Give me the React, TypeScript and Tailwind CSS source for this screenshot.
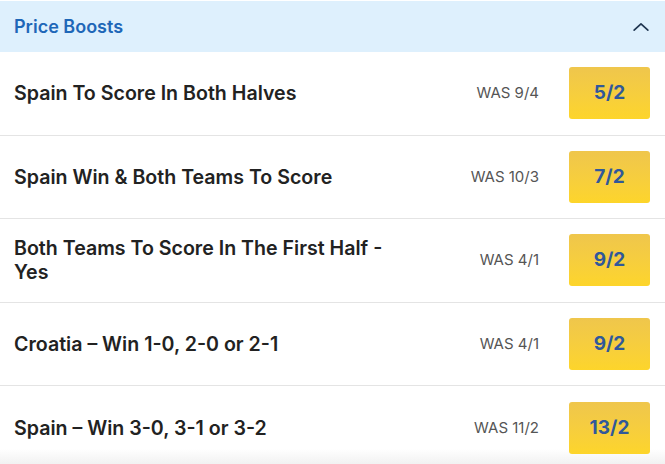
import * as React from 'react';

interface Boost {
  title: string;
  was: string;
  odds: string;
}

const boosts: Boost[] = [
  { title: 'Spain To Score In Both Halves', was: 'WAS 9/4', odds: '5/2' },
  { title: 'Spain Win & Both Teams To Score', was: 'WAS 10/3', odds: '7/2' },
  { title: 'Both Teams To Score In The First Half - Yes', was: 'WAS 4/1', odds: '9/2' },
  { title: 'Croatia – Win 1-0, 2-0 or 2-1', was: 'WAS 4/1', odds: '9/2' },
  { title: 'Spain – Win 3-0, 3-1 or 3-2', was: 'WAS 11/2', odds: '13/2' },
];

export default function App() {
  return (
    <div className="w-[665px] h-[464px] overflow-hidden bg-white font-['Inter','Liberation_Sans',sans-serif]">
      {/* Header */}
      <div className="h-[51px] mt-[1px] bg-[#def0fd] flex items-center justify-between pl-[14px] pr-[13px]">
        <span className="text-[18px] font-semibold text-[#1e67b8]">Price Boosts</span>
        <ChevronUp />
      </div>

      {boosts.map((b, i) => (
        <BoostRow key={i} boost={b} last={i === boosts.length - 1} />
      ))}
    </div>
  );
}

function BoostRow({ boost, last }: { boost: Boost; last: boolean }) {
  return (
    <div
      className={
        last
          ? 'h-[84px] flex items-center pl-[14px] pr-[15px] bg-linear-to-b from-white from-75% to-[#ececec]'
          : 'h-[83.5px] box-border flex items-center pl-[14px] pr-[15px] border-b border-[#e4e4e4]'
      }
    >
      <div className="flex-1 pr-4">
        <p className="w-[400px] text-[19.6px] leading-[24px] font-semibold text-[#222222]">
          {boost.title}
        </p>
      </div>
      <span className="text-[15px] text-[#555555] mr-[30px]">{boost.was}</span>
      <button className="w-[81px] h-[52px] rounded-[3px] bg-linear-to-b from-[#efc64c] to-[#fdd52a] text-[19px] font-bold text-[#30589a]">
        {boost.odds}
      </button>
    </div>
  );
}

function ChevronUp() {
  return (
    <svg width="22" height="22" viewBox="0 0 24 24" fill="none" stroke="#1f3550" strokeWidth="1.8" strokeLinecap="round" strokeLinejoin="round">
      <path d="M4.5 15.5l7.5-7 7.5 7" />
    </svg>
  );
}
